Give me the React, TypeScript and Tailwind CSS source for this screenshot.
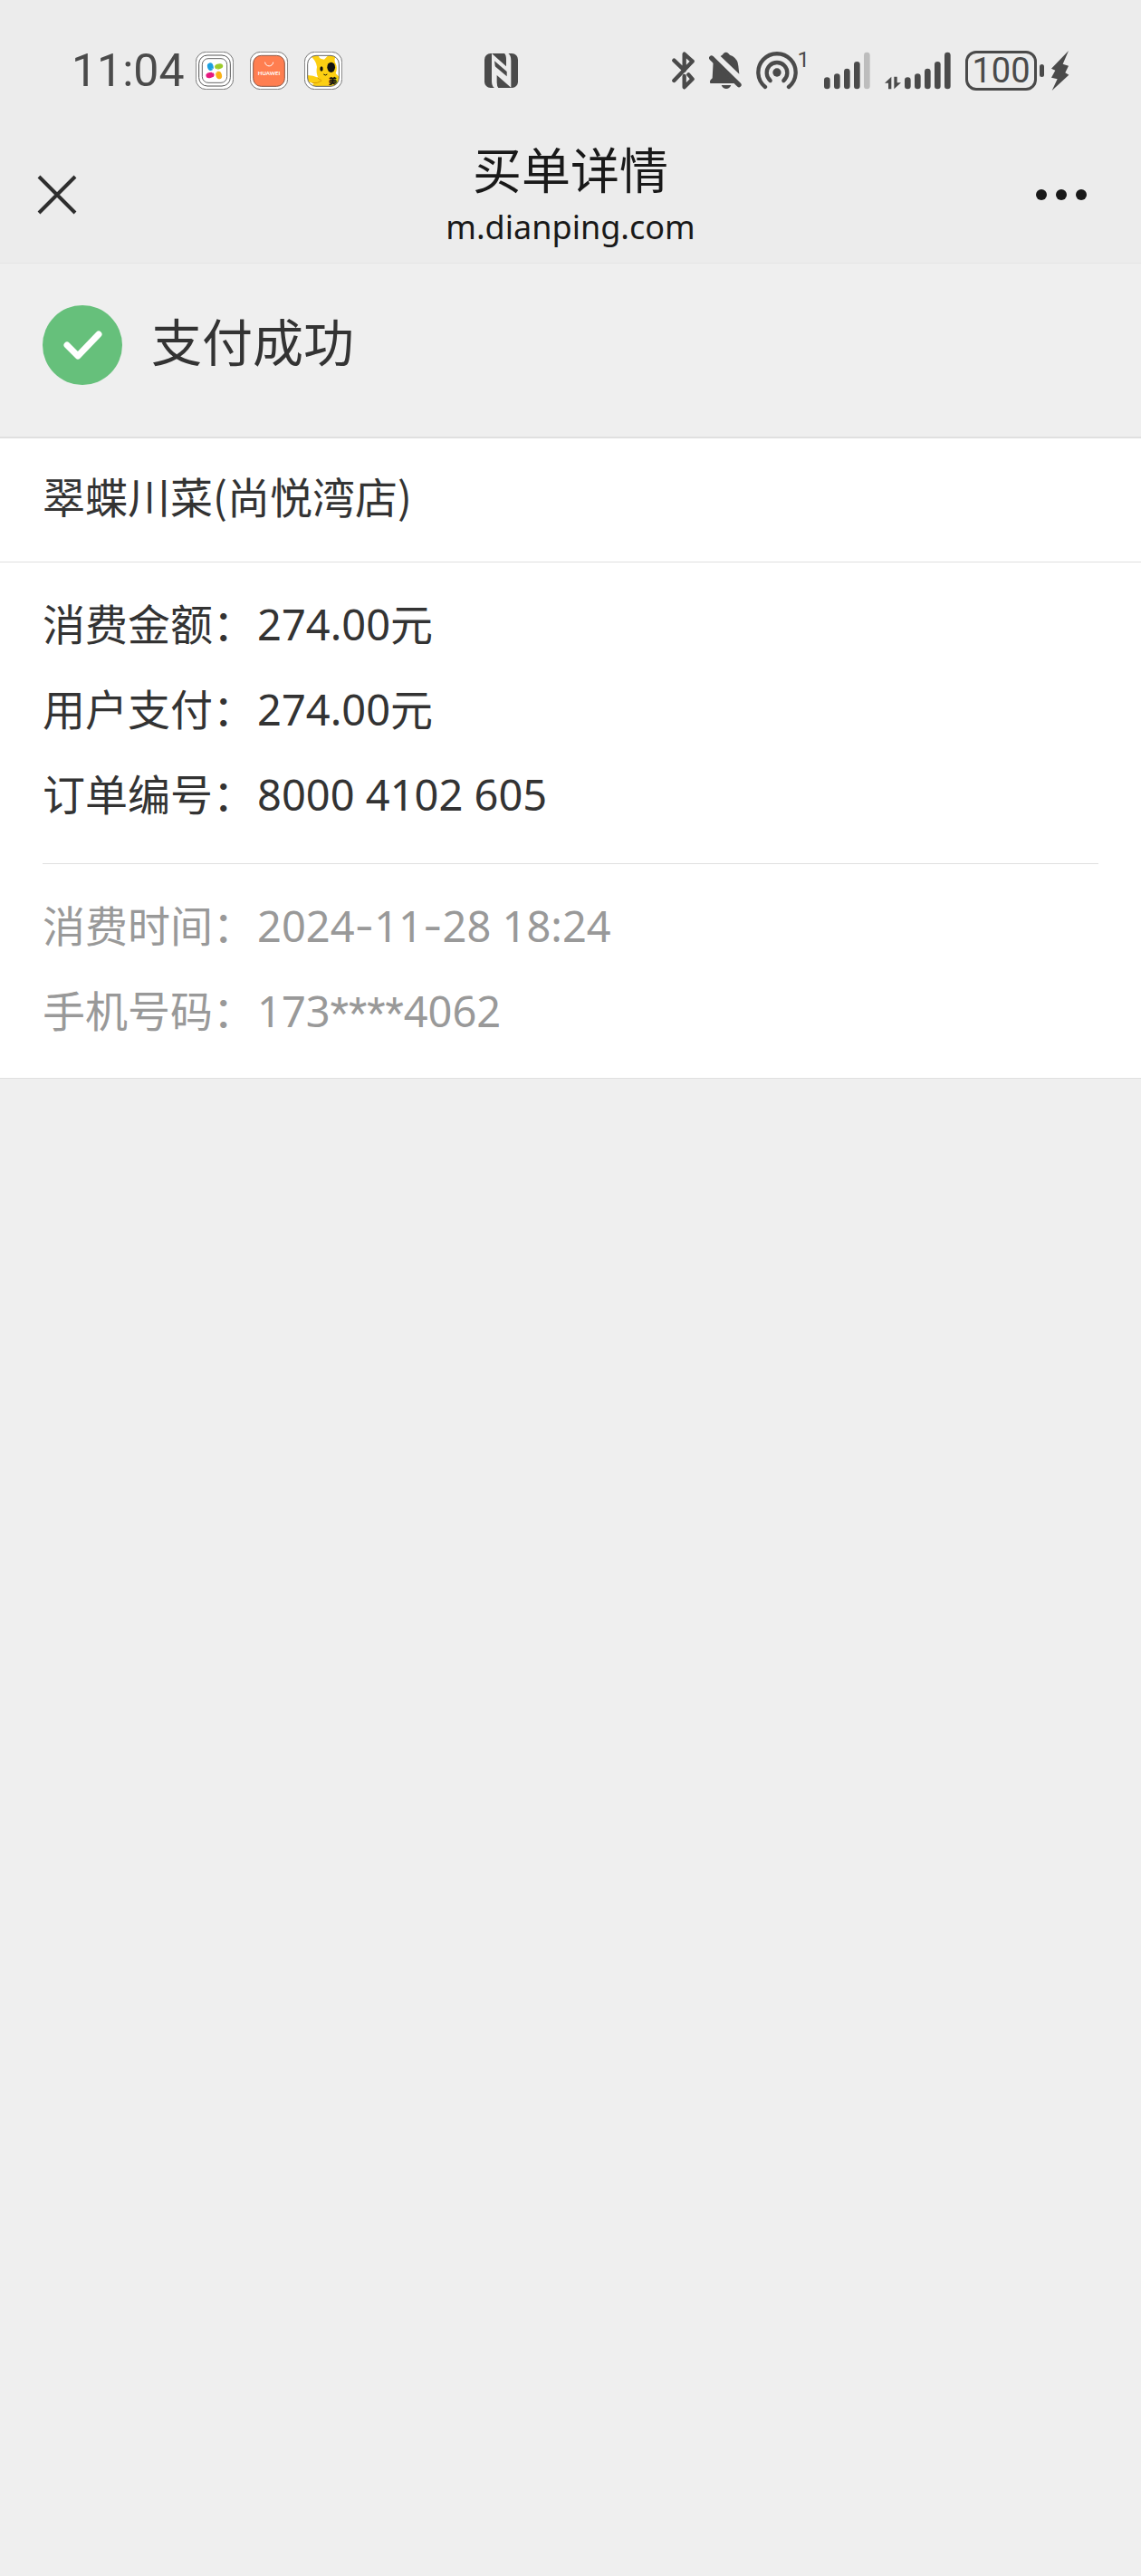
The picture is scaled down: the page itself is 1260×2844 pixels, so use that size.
type TRow = {
    label: string
    value: string
}

const ORDER_ROWS: TRow[] = [
    { label: "消费金额：", value: "274.00元" },
    { label: "用户支付：", value: "274.00元" },
    { label: "订单编号：", value: "8000 4102 605" },
]

const META_ROWS: TRow[] = [
    { label: "消费时间：", value: "2024-11-28 18:24" },
    { label: "手机号码：", value: "173****4062" },
]

const PhotosIcon = () => (
    <svg className="size-[42px]" viewBox="0 0 126 126" fill="none">
        <rect x="1" y="1" width="124" height="124" rx="34" fill="#fff" stroke="#777" strokeWidth="3" />
        <rect x="11" y="12" width="104" height="102" rx="28" stroke="#555" strokeWidth="3" />
        <rect x="22" y="23" width="82" height="80" rx="20" stroke="#666" strokeWidth="3" />
        <ellipse cx="49" cy="50" rx="10" ry="13" fill="#1b9fe0" transform="rotate(-15 49 50)" />
        <ellipse cx="77" cy="49" rx="14" ry="9" fill="#9dcb2b" transform="rotate(-12 77 49)" />
        <ellipse cx="48" cy="78" rx="14" ry="9" fill="#e5197f" transform="rotate(-12 48 78)" />
        <ellipse cx="77" cy="78" rx="10" ry="13" fill="#fbb216" transform="rotate(-15 77 78)" />
        <path d="M55 56l4 4M71 56l-4 4M56 71l3-3M70 70l-3-3" stroke="#fff" strokeWidth="3" />
    </svg>
)

const StoreIcon = () => (
    <svg className="size-[42px]" viewBox="0 0 126 126" fill="none">
        <rect x="1" y="1" width="124" height="124" rx="34" fill="#fff" stroke="#777" strokeWidth="3" />
        <rect x="11" y="13" width="104" height="102" rx="26" fill="#ff7e50" stroke="#8a5a4a" strokeWidth="3" />
        <path d="M50 36c2 16 25 16 27 0" stroke="#fff" strokeWidth="3" strokeLinecap="round" />
        <text x="63" y="79" fill="#fff" textAnchor="middle" className="font-['Lato'] text-[18px] font-bold">
            HUAWEI
        </text>
    </svg>
)

const MeituanIcon = () => (
    <svg className="size-[42px]" viewBox="0 0 126 126" fill="none">
        <defs>
            <clipPath id="tile">
                <rect x="11" y="13" width="104" height="102" rx="28" />
            </clipPath>
        </defs>
        <rect x="1" y="1" width="124" height="124" rx="34" fill="#fff" stroke="#777" strokeWidth="3" />
        <g clipPath="url(#tile)">
            <path d="M18 12H46Q50 22 56 24L66 26Q74 18 80 12H106Q98 24 102 36Q112 52 104 72L116 84V116H22L32 106Q16 102 10 96V78Q30 78 46 86Q38 70 42 50Q40 30 18 12z" fill="#fccf12" />
            <path d="M26 104Q44 106 58 96M44 86Q48 92 56 94" stroke="#d99a05" strokeWidth="3" />
            <ellipse cx="89" cy="52" rx="13" ry="17" fill="#111" />
            <ellipse cx="57" cy="57" rx="5" ry="8" fill="#111" />
            <path d="M64 75q6 6 12 0" stroke="#111" strokeWidth="3" />
            <text x="94" y="107" fill="#111" textAnchor="middle" className="font-['Noto_Sans_CJK_SC'] text-[28px] font-black">
                美
            </text>
        </g>
        <rect x="11" y="13" width="104" height="102" rx="28" stroke="#666" strokeWidth="3" />
    </svg>
)

const NfcIcon = () => (
    <svg className="h-[38px] w-[37px]" viewBox="0 0 111 114">
        <rect width="111" height="114" rx="20" fill="#4a4a4a" />
        <path d="M24 0L72 43V22Q72 4 66 0H79Q88 6 88 24V113L41 72V96Q41 108 46 114H33Q24 108 24 92z" fill="#ececec" />
        <path d="M33 25L74 60V76L33 41z" fill="#4a4a4a" />
        <path d="M33 24V88Q33 100 36 108V50z" fill="#ececec" />
    </svg>
)

const BluetoothIcon = () => (
    <svg className="h-11 w-[26px]" viewBox="0 0 78 132" fill="none" stroke="#4a4a4a" strokeWidth="13" strokeLinecap="round" strokeLinejoin="round">
        <path d="M10 32L44 65M10 99L71 35L44 11V64M58 79L71 94L44 121V84" />
    </svg>
)

const MutedBellIcon = () => (
    <svg className="h-11 w-9" viewBox="0 0 108 132" fill="#4a4a4a">
        <path d="M14 34L85 108H4Q0 104 5 97L11 91z" />
        <path d="M38 18Q46 14 48 9Q56 1 64 9Q67 15 78 18Q96 30 97 50L100 77z" />
        <path d="M41 114H73Q68 126 57 126T41 114z" />
        <path d="M8 24L99 113" stroke="#4a4a4a" strokeWidth="16" strokeLinecap="round" />
    </svg>
)

const HotspotIcon = () => (
    <svg className="h-11 w-[46px]" viewBox="0 0 138 132" fill="none" stroke="#4a4a4a" strokeWidth="13" strokeLinecap="round">
        <circle cx="69" cy="72" r="14" fill="#4a4a4a" stroke="none" />
        <path d="M47 99A34 34 0 1 1 91 99" />
        <path d="M30 120A62 62 0 1 1 108 120" />
    </svg>
)

const SignalBars = ({ weak = false }: { weak?: boolean }) => (
    <svg className="h-11 w-[51px]" viewBox="0 0 153 132" fill="#4a4a4a">
        <rect x="0" y="88" width="20" height="39" rx="10" />
        <rect x="33" y="76" width="20" height="51" rx="10" />
        <rect x="66" y="59" width="20" height="68" rx="10" />
        <rect x="99" y="36" width="20" height="91" rx="10" />
        <rect x="132" y="5" width="20" height="122" rx="10" fill={weak ? "#bdbdbd" : "#4a4a4a"} />
    </svg>
)

const DataArrows = () => (
    <svg className="h-11 w-[18px]" viewBox="0 0 54 132" fill="#4a4a4a">
        <path d="M22 86V127H12V107H0z" />
        <path d="M31 86H41V106H54L31 127z" />
    </svg>
)

const BoltIcon = () => (
    <svg className="h-11 w-5" viewBox="0 0 60 132" fill="#4a4a4a">
        <path d="M57 0L0 59L13 65L0 89L20 94L2 132L58 80L46 73L57 50L38 44z" />
    </svg>
)

const StatusBar = () => (
    <div className="flex h-[140px] items-center px-[79px] pt-4 font-['Roboto'] text-[#4a4a4a]">
        <span className="text-[50px] leading-none">11:04</span>
        <div className="ml-3 flex gap-[18px]">
            <PhotosIcon />
            <StoreIcon />
            <MeituanIcon />
        </div>
        <div className="ml-[157px]">
            <NfcIcon />
        </div>
        <div className="ml-auto flex items-center">
            <BluetoothIcon />
            <div className="ml-4"><MutedBellIcon /></div>
            <div className="ml-4"><HotspotIcon /></div>
            <span className="h-11 text-[24px] leading-[20px]">1</span>
            <div className="ml-4"><SignalBars weak /></div>
            <div className="ml-4"><DataArrows /></div>
            <div className="ml-1"><SignalBars /></div>
            <span className="ml-4 flex h-11 w-[79px] items-center justify-center rounded-[12px] border-[3px] border-[#4a4a4a] text-[38px] leading-none">
                100
            </span>
            <span className="ml-[3px] h-[14px] w-[5px] rounded-full bg-[#4a4a4a]" />
            <div className="ml-2"><BoltIcon /></div>
        </div>
    </div>
)

const NavBar = () => (
    <div className="flex h-[151px] items-center justify-between border-b border-[#e5e5e5] px-10 text-[#191919]">
        <button type="button" aria-label="关闭" className="flex w-[120px]">
            <svg className="size-[46px]" viewBox="0 0 46 46" stroke="#2e2e2e" strokeWidth="4">
                <path d="M3 3L43 43M43 3L3 43" />
            </svg>
        </button>
        <div className="text-center">
            <h1 className="text-[54px] leading-[72px]">买单详情</h1>
            <p className="text-[36px] leading-[54px]">m.dianping.com</p>
        </div>
        <button type="button" aria-label="更多" className="flex w-[120px] justify-end gap-[10px] pr-5">
            <span className="size-3 rounded-full bg-[#191919]" />
            <span className="size-3 rounded-full bg-[#191919]" />
            <span className="size-3 rounded-full bg-[#191919]" />
        </button>
    </div>
)

// wide dashes and narrow asterisks between the digits
const Value = ({ text }: { text: string }) => (
    <>
        {text.split(/(-|\*+)/).map((part, i) => {
            if (part === "-") return <span key={i} className="font-['Inter'] leading-none">{part}</span>
            if (part.startsWith("*")) return <span key={i} className="font-['Roboto'] leading-none">{part}</span>
            return part
        })}
    </>
)

const Rows = ({ rows }: { rows: TRow[] }) => (
    <dl>
        {rows.map(row => (
            <div key={row.label} className="flex gap-0.5 leading-[94px]">
                <dt>{row.label}</dt>
                <dd><Value text={row.value} /></dd>
            </div>
        ))}
    </dl>
)

const App = () => {
    return (
        <div className="min-h-screen bg-[#efefef] font-['Noto_Sans','Noto_Sans_CJK_SC',sans-serif] text-[#333]">
            <header className="bg-[#ececec]">
                <StatusBar />
                <NavBar />
            </header>
            <main>
                <div className="flex h-[193px] items-center gap-8 border-b-2 border-[#e0e0e0] px-[47px] pb-3">
                    <svg className="size-[88px]" viewBox="0 0 88 88" fill="none">
                        <circle cx="44" cy="44" r="44" fill="#66c07b" />
                        <path d="M27 44L39 56L62 32" stroke="#fff" strokeWidth="7" strokeLinecap="round" strokeLinejoin="round" />
                    </svg>
                    <p className="pb-2 text-[56px] leading-[80px]">支付成功</p>
                </div>
                <div className="border-b border-[#e0e0e0] bg-white text-[47px]">
                    <h2 className="border-b border-[#e0e0e0] px-[47px] pt-4 pb-[26px] font-['Noto_Sans_CJK_SC',sans-serif] leading-[94px]">
                        翠蝶川菜(尚悦湾店)
                    </h2>
                    <div className="px-[47px]">
                        <div className="border-b border-[#e0e0e0] pt-[21px] pb-[29px]">
                            <Rows rows={ORDER_ROWS} />
                        </div>
                        <div className="pt-[21px] pb-[27px] text-[#999]">
                            <Rows rows={META_ROWS} />
                        </div>
                    </div>
                </div>
            </main>
        </div>
    )
}

export default App
